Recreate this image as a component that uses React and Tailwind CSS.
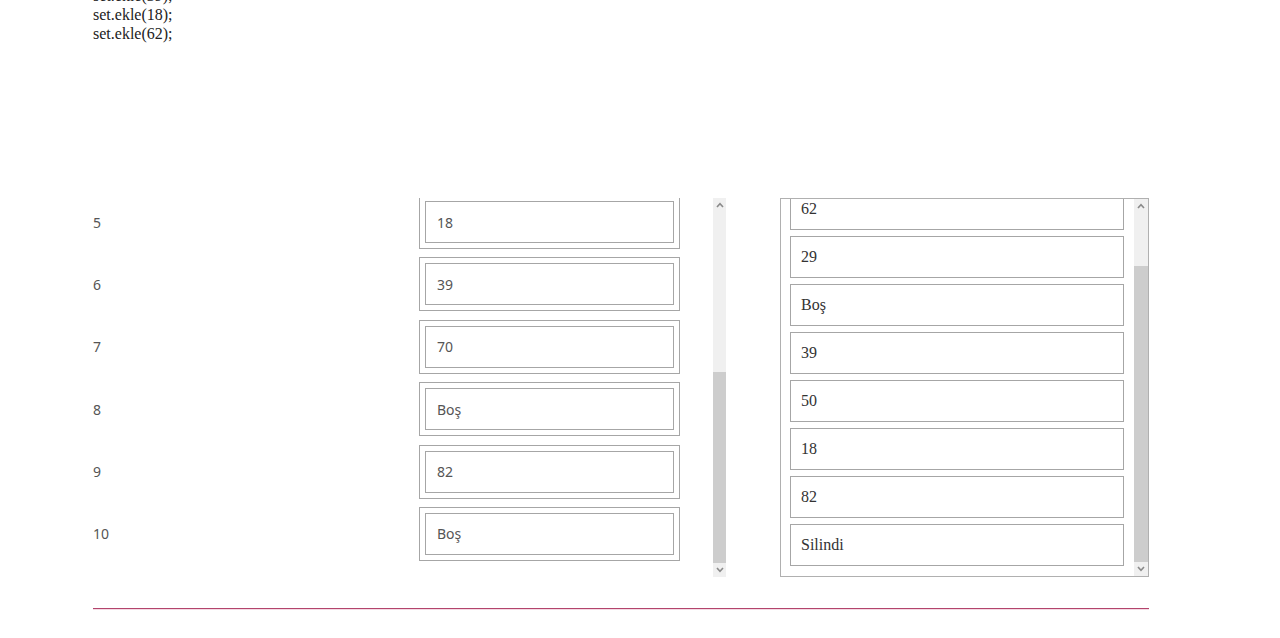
import React from 'react';

const codeLines = ['set.ekle(39);', 'set.ekle(18);', 'set.ekle(62);'];

const tableRows = [
    { no: 5, value: '18' },
    { no: 6, value: '39' },
    { no: 7, value: '70' },
    { no: 8, value: 'Boş' },
    { no: 9, value: '82' },
    { no: 10, value: 'Boş' },
];

const setItems = ['62', '29', 'Boş', '39', '50', '18', '82', 'Silindi'];

const Caret = ({ down }) => (
    <svg width="8" height="6" viewBox="0 0 8 6" className={down ? 'rotate-180' : ''}>
        <path d="M1 5 L4 1.6 L7 5" fill="none" stroke="#8a8a8a" strokeWidth="1.6" />
    </svg>
);

const ScrollBar = ({ thumbTop, className }) => (
    <div className={`flex flex-col bg-[#f0f0f0] ${className}`}>
        <div className="h-[14px] flex items-center justify-center shrink-0">
            <Caret />
        </div>
        <div className="flex-1 relative">
            {/* thumb */}
            <div className="absolute left-0 right-0 bottom-0 bg-[#cdcdcd]" style={{ top: thumbTop }} />
        </div>
        <div className="h-[14px] flex items-center justify-center shrink-0">
            <Caret down />
        </div>
    </div>
);

export default function App() {
    return (
        <div className="min-h-[638px] bg-white overflow-hidden">
            <div className="ml-[93px] w-[1056px]">
                {/* Code snippet */}
                <div className="-mt-[14px] font-['Liberation_Serif',serif] text-[16px] leading-[19px] text-[#222]">
                    {codeLines.map((line, i) => (
                        <div key={i}>{line}</div>
                    ))}
                </div>

                <div className="mt-[155px] flex h-[379px]">
                    {/* Array table */}
                    <div className="w-[633px] flex">
                        <div className="w-[620px] h-full overflow-hidden">
                            <div className="-mt-[3px] flex flex-col font-['Noto_Sans',sans-serif] text-[14px] text-[#555]">
                                {tableRows.map(({ no, value }) => (
                                    <div key={no} className="h-[62.4px] flex items-start">
                                        <div className="w-[326px] h-[54px] flex items-center">{no}</div>
                                        <div className="w-[261px] h-[54px] border border-[#a6a6a6] p-[5px]">
                                            <div className="h-full border border-[#a6a6a6] flex items-center px-[11px]">
                                                {value}
                                            </div>
                                        </div>
                                    </div>
                                ))}
                            </div>
                        </div>
                        <ScrollBar thumbTop={160} className="w-[13px] h-full" />
                    </div>

                    {/* Set contents */}
                    <div className="ml-[54px] w-[369px] h-full border border-[#b0b0b0] flex">
                        <div className="flex-1 overflow-hidden pl-[9px] pr-[10px]">
                            <div className="-mt-[11px] flex flex-col gap-[6px] font-['Liberation_Serif',serif] text-[16px] text-[#333]">
                                {setItems.map((item, i) => (
                                    <div key={i} className="h-[42px] border border-[#a6a6a6] flex items-center px-[10px] shrink-0">
                                        {item}
                                    </div>
                                ))}
                            </div>
                        </div>
                        <ScrollBar thumbTop={53} className="w-[14px] h-full" />
                    </div>
                </div>

                <div className="mt-[31px] h-px bg-[#b3446c]" />
                <div className="h-px bg-[#f4dbe4]" />
            </div>
        </div>
    );
}
